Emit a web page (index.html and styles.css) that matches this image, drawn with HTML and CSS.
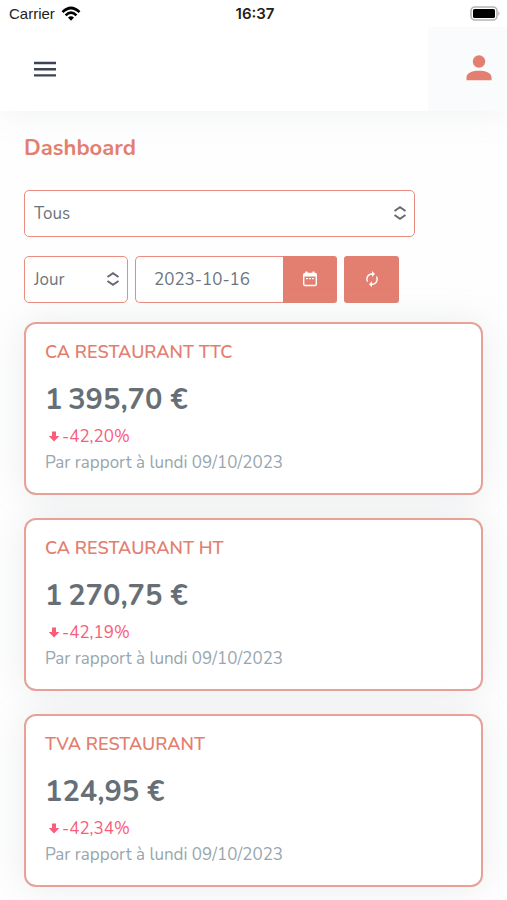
FILE: index.html
```html
<!DOCTYPE html>
<html lang="fr">
<head>
<meta charset="utf-8">
<meta name="viewport" content="width=device-width, initial-scale=1">
<title>Dashboard</title>
<link rel="stylesheet" href="styles.css">
</head>
<body>
<div class="status">
  <div class="carrier">Carrier
    <svg width="20" height="16" viewBox="0 0 20 16" fill="none" stroke="#000" stroke-width="2.6" aria-hidden="true"><path d="M1.5 6.2Q10-2.2 18.5 6.2M4.6 9.4Q10 4 15.4 9.4"/><path d="M7 11.6Q10 9 13 11.6L10 14.8Z" fill="#000" stroke="none"/></svg>
  </div>
  <div class="clock">16:37</div>
  <svg class="battery" width="31" height="15" viewBox="0 0 31 15" aria-hidden="true"><rect x="1" y="1" width="26" height="13" rx="4" fill="#fff" stroke="#b4b4b4" stroke-width="1.6"/><rect x="3" y="3" width="22" height="9" rx="1.5"/><path d="M28.5 5Q30.500 7.500 28.500 10Z" fill="#999"/></svg>
</div>
<header class="topbar">
  <button class="menu" type="button" aria-label="Menu"><svg width="24" height="18" viewBox="0 0 24 18" stroke="#3e4354" stroke-width="2.400"><path d="M1 3h22M1 9.200h22M1 15.400h22"/></svg></button>
  <button class="user" type="button" aria-label="Compte"><svg width="26" height="28" viewBox="0 0 26 28" fill="#e37f70"><circle cx="13" cy="6.500" r="6.200"/><path d="M.5 25.300V22.500C.5 17.500 7 15.800 13 15.800S25.500 17.500 25.500 22.500V25.300Z"/></svg></button>
</header>
<main class="content">
  <h1>Dashboard</h1>
  <div class="select wide">
    <select aria-label="Restaurant"><option>Tous</option></select>
    <svg width="14" height="14" viewBox="0 0 14 14"><path d="M1.500 5L7 1.200 12.500 5M1.500 9L7 12.800 12.500 9"/></svg>
  </div>
  <div class="filters">
    <div class="select">
      <select aria-label="Période"><option>Jour</option></select>
      <svg width="14" height="14" viewBox="0 0 14 14"><path d="M1.500 5L7 1.200 12.500 5M1.500 9L7 12.800 12.500 9"/></svg>
    </div>
    <div class="date">
      <input type="text" value="2023-10-16" aria-label="Date">
      <button class="action" type="button" aria-label="Calendrier"><svg width="14" height="17" viewBox="0 0 14 17"><path d="M2 2.500h10a1.300 1.300 0 0 1 1.300 1.300v9.400a1.300 1.300 0 0 1-1.300 1.300H2a1.300 1.300 0 0 1-1.300-1.300V3.800A1.300 1.300 0 0 1 2 2.500Z" fill="none" stroke="#fff" stroke-width="1.400"/><path d="M1 3h12v2.500H1ZM2.500 .5h2V3h-2ZM9.500 .5h2V3h-2ZM3 7h2v1.300H3ZM6 7h2v1.300H6ZM9 7h2v1.300H9Z" fill="#fff"/></svg></button>
    </div>
    <button class="action refresh" type="button" aria-label="Actualiser"><svg width="16" height="17" viewBox="2 1 20 23" fill="#fff"><path d="M12 6v3l4-4-4-4v3a8 8 0 0 0-6.760 12.260L6.700 14.800A5.870 5.870 0 0 1 6 12a6 6 0 0 1 6-6Zm6.760 1.740L17.300 9.200A6 6 0 0 1 12 18v-3l-4 4 4 4v-3a8 8 0 0 0 6.760-12.260Z"/></svg></button>
  </div>
  <section class="cards">
    <article class="card">
      <h2>CA RESTAURANT TTC</h2>
      <p class="amount">1&#8201;395,70 €</p>
      <p class="change"><svg width="12" height="12" viewBox="0 0 12 12"><path d="M4 .5h4v4.500H11.300L6 10.500 .7 5H4Z"/></svg>-42,20%</p>
      <p class="note">Par rapport à lundi 09/10/2023</p>
    </article>
    <article class="card">
      <h2>CA RESTAURANT HT</h2>
      <p class="amount">1&#8201;270,75 €</p>
      <p class="change"><svg width="12" height="12" viewBox="0 0 12 12"><path d="M4 .5h4v4.500H11.300L6 10.500 .7 5H4Z"/></svg>-42,19%</p>
      <p class="note">Par rapport à lundi 09/10/2023</p>
    </article>
    <article class="card">
      <h2>TVA RESTAURANT</h2>
      <p class="amount">124,95 €</p>
      <p class="change"><svg width="12" height="12" viewBox="0 0 12 12"><path d="M4 .5h4v4.500H11.300L6 10.500 .7 5H4Z"/></svg>-42,34%</p>
      <p class="note">Par rapport à lundi 09/10/2023</p>
    </article>
  </section>
</main>
</body>
</html>
```
FILE: styles.css
```css
* { box-sizing: border-box; }
body { margin: 0; background: #fefefe; color: #6c757d; font: 17px/26px Nunito, Lato, sans-serif; }
h1, h2, p { margin: 0; }
button, input, select { font: inherit; color: inherit; margin: 0; }
button { border: 0; padding: 0; background: none; cursor: pointer; }
svg { display: block; flex: none; }

.status { position: relative; display: grid; grid-template-columns: 1fr auto 1fr; align-items: center; height: 27px; padding: 0 6px 0 9px; background: #fff; color: #222; font: 15px/27px "Liberation Sans", sans-serif; }
.carrier { display: flex; align-items: center; gap: 6px; }
.clock { font-family: Inter, sans-serif; font-weight: 600; }
.battery { justify-self: end; }

.topbar { display: flex; justify-content: space-between; height: 84px; background: #fff; box-shadow: 0 0 35px rgba(154, 161, 171, .15); }
.menu { padding: 0 33px; }
.user { display: flex; align-items: center; justify-content: flex-end; width: 79px; padding-right: 15px; background: #fafbfd; }

.content { padding: 20px 24px 24px; }
h1 { color: #e37f70; font-size: 22px; line-height: 34px; font-weight: 700; }
.select { position: relative; width: 104px; }
.select.wide { width: 391px; max-width: 100%; margin-top: 25px; }
.select select { display: block; width: 100%; height: 47px; padding: 1px 9px 0; border: 1px solid #e98b7f; border-radius: 5px; background: #fff; appearance: none; }
.select svg { position: absolute; right: 8px; top: 16px; fill: none; stroke: #666b70; stroke-width: 2; pointer-events: none; }
.filters { display: flex; gap: 7px; margin-top: 19px; }
.date { display: flex; width: 202px; height: 47px; }
.date input { flex: 1; min-width: 0; padding: 1px 18px 0; border: 1px solid #e98b7f; border-right: 0; border-radius: 5px 0 0 5px; background: #fff; }
.action { display: grid; place-items: center; width: 54px; height: 47px; border-radius: 0 3px 3px 0; background: #e37f70; }
.refresh { width: 55px; border-radius: 3px; }

.cards { display: grid; gap: 23px; margin-top: 19px; }
.card { padding: 15px 19px 17px; border: 2px solid #e8a196; border-radius: 12px; background: #fff; box-shadow: 0 0 35px rgba(154, 161, 171, .2); }
.card h2 { color: #e37f70; font-size: 18px; line-height: 26px; font-weight: 600; }
.amount { margin: 13px 0 2px; font-size: 29px; line-height: 44px; font-weight: 700; color: #676f76; }
.change { display: flex; align-items: center; gap: 2px; padding-left: 3px; color: #fa5c7c; }
.change svg { fill: currentColor; }
.note { color: #98a6ad; }
```
